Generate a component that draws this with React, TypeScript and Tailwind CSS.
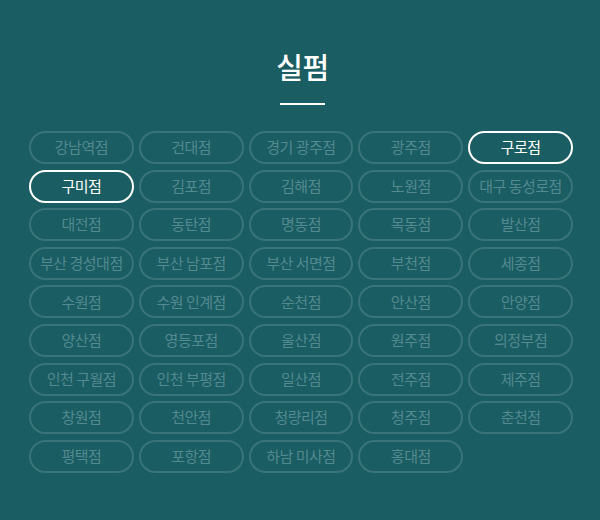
import React from "react";

const stores = [
  "강남역점", "건대점", "경기 광주점", "광주점", "구로점",
  "구미점", "김포점", "김해점", "노원점", "대구 동성로점",
  "대전점", "동탄점", "명동점", "목동점", "발산점",
  "부산 경성대점", "부산 남포점", "부산 서면점", "부천점", "세종점",
  "수원점", "수원 인계점", "순천점", "안산점", "안양점",
  "양산점", "영등포점", "울산점", "원주점", "의정부점",
  "인천 구월점", "인천 부평점", "일산점", "전주점", "제주점",
  "창원점", "천안점", "청량리점", "청주점", "춘천점",
  "평택점", "포항점", "하남 미사점", "홍대점",
];

const active = new Set(["구로점", "구미점"]);

export default function App() {
  return (
    <div
      className="w-[600px] h-[520px] bg-[#1a5d63] flex flex-col"
      style={{ fontFamily: '"Noto Sans CJK KR", "Noto Sans", sans-serif' }}
    >
      <div className="flex flex-col items-center pl-[5px]">
        <h1 className="mt-[46px] text-[29px] leading-[40px] font-medium text-white tracking-[-0.5px]">
          실펌
        </h1>
        <div className="mt-[17px] w-[45px] h-[2px] bg-white" />
      </div>
      <ul className="mt-[26px] ml-[29px] w-[544px] grid grid-cols-5 gap-x-[5px] gap-y-[5.6px]">
        {stores.map((s) => (
          <li key={s}>
            <button
              className={
                active.has(s)
                  ? "w-full h-[33px] rounded-full border-2 border-white text-white text-[15px] tracking-[-0.5px] flex items-center justify-center"
                  : "w-full h-[33px] rounded-full border-2 border-[#397479] text-[#53898f] text-[15px] tracking-[-0.5px] flex items-center justify-center"
              }
            >
              {s}
            </button>
          </li>
        ))}
      </ul>
    </div>
  );
}
